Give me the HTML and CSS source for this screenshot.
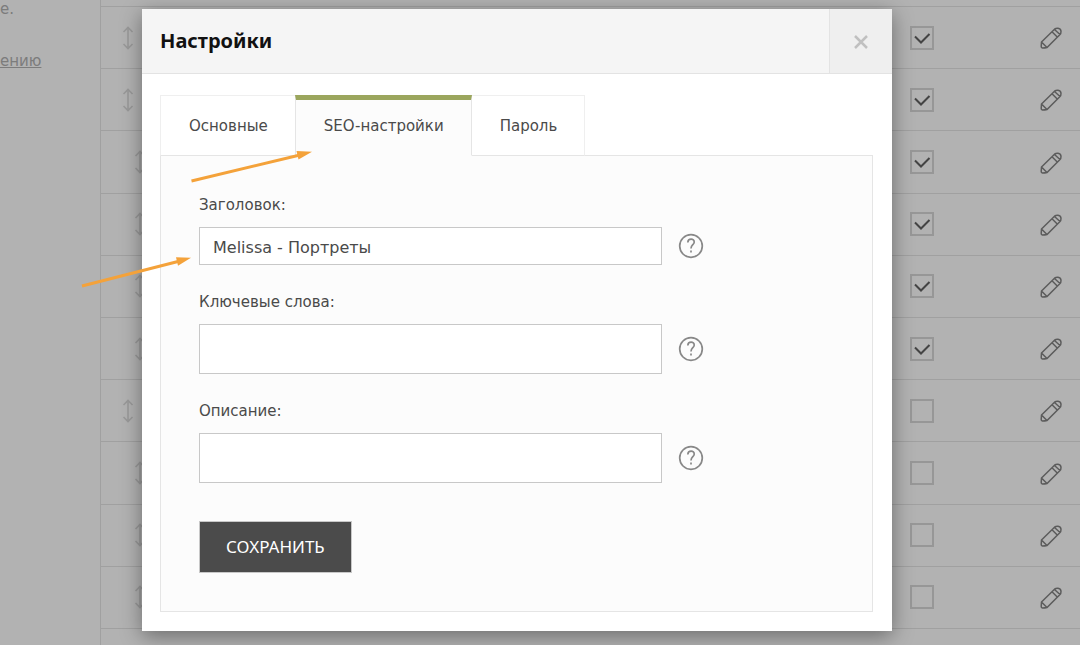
FILE: index.html
```html
<!DOCTYPE html>
<html lang="ru">
<head>
<meta charset="utf-8">
<title>Настройки</title>
<link rel="stylesheet" href="styles.css">
</head>
<body>
<svg class="sprite" aria-hidden="true">
  <symbol id="drag" viewBox="0 0 12 24"><path d="M6 1.500v21M1.500 6L6 1.500 10.500 6M1.500 18L6 22.500 10.500 18"/></symbol>
  <symbol id="check" viewBox="0 0 24 24"><path d="M5 10.500l6 6 8.500-8.500"/></symbol>
  <symbol id="pencil" viewBox="0 0 22 22"><path d="M1.500 15L14.500 2.200Q16 1 18 1.200Q21 1.600 21 4.500Q21 6.500 20 7.500L7 20.500Q5 21 2.500 21Q1.200 20.800 1.200 19.500ZM1.500 15L7 20.500M12 4.700l5.500 5.500M14.500 2.500l5.500 5"/></symbol>
  <symbol id="help" viewBox="0 0 26 26"><circle cx="13" cy="13" r="11.300"/><path d="M9.800 9.500c.2-4.500 6.700-4.200 6.400-.3-.2 2.500-3.200 2.700-3.200 6.300M13 17.500v2"/></symbol>
</svg>

<main class="page">
  <aside class="side">
    <p class="side-text">е.</p>
    <a class="side-link" href="#">ению</a>
  </aside>
  <ul class="rows">
    <li class="row"><svg class="drag"><use href="#drag"/></svg><label class="tick"><input type="checkbox" aria-label="Показывать" checked><svg><use href="#check"/></svg></label><button class="edit" aria-label="Изменить"><svg><use href="#pencil"/></svg></button></li>
    <li class="row"><svg class="drag"><use href="#drag"/></svg><label class="tick"><input type="checkbox" aria-label="Показывать" checked><svg><use href="#check"/></svg></label><button class="edit" aria-label="Изменить"><svg><use href="#pencil"/></svg></button></li>
    <li class="row nested"><svg class="drag"><use href="#drag"/></svg><label class="tick"><input type="checkbox" aria-label="Показывать" checked><svg><use href="#check"/></svg></label><button class="edit" aria-label="Изменить"><svg><use href="#pencil"/></svg></button></li>
    <li class="row nested"><svg class="drag"><use href="#drag"/></svg><label class="tick"><input type="checkbox" aria-label="Показывать" checked><svg><use href="#check"/></svg></label><button class="edit" aria-label="Изменить"><svg><use href="#pencil"/></svg></button></li>
    <li class="row nested"><svg class="drag"><use href="#drag"/></svg><label class="tick"><input type="checkbox" aria-label="Показывать" checked><svg><use href="#check"/></svg></label><button class="edit" aria-label="Изменить"><svg><use href="#pencil"/></svg></button></li>
    <li class="row nested"><svg class="drag"><use href="#drag"/></svg><label class="tick"><input type="checkbox" aria-label="Показывать" checked><svg><use href="#check"/></svg></label><button class="edit" aria-label="Изменить"><svg><use href="#pencil"/></svg></button></li>
    <li class="row"><svg class="drag"><use href="#drag"/></svg><label class="tick"><input type="checkbox" aria-label="Показывать"><svg><use href="#check"/></svg></label><button class="edit" aria-label="Изменить"><svg><use href="#pencil"/></svg></button></li>
    <li class="row nested"><svg class="drag"><use href="#drag"/></svg><label class="tick"><input type="checkbox" aria-label="Показывать"><svg><use href="#check"/></svg></label><button class="edit" aria-label="Изменить"><svg><use href="#pencil"/></svg></button></li>
    <li class="row nested"><svg class="drag"><use href="#drag"/></svg><label class="tick"><input type="checkbox" aria-label="Показывать"><svg><use href="#check"/></svg></label><button class="edit" aria-label="Изменить"><svg><use href="#pencil"/></svg></button></li>
    <li class="row nested"><svg class="drag"><use href="#drag"/></svg><label class="tick"><input type="checkbox" aria-label="Показывать"><svg><use href="#check"/></svg></label><button class="edit" aria-label="Изменить"><svg><use href="#pencil"/></svg></button></li>
  </ul>
</main>

<div class="overlay">
  <section class="modal" role="dialog" aria-labelledby="modal-title">
    <header class="modal-head">
      <h1 class="modal-title" id="modal-title">Настройки</h1>
      <button class="close" aria-label="Закрыть"><svg viewBox="0 0 14 14"><path d="M1 1l12 12M13 1L1 13"/></svg></button>
    </header>
    <div class="modal-body">
      <div class="tabs" role="tablist">
        <button class="tab" role="tab">Основные</button>
        <button class="tab active" role="tab" aria-selected="true">SEO-настройки</button>
        <button class="tab" role="tab">Пароль</button>
      </div>
      <form class="panel">
        <div class="field">
          <label for="title">Заголовок:</label>
          <div class="control"><input class="box" id="title" type="text" value="Melissa - Портреты"><svg class="help"><use href="#help"/></svg></div>
        </div>
        <div class="field">
          <label for="keys">Ключевые слова:</label>
          <div class="control"><textarea class="box" id="keys"></textarea><svg class="help"><use href="#help"/></svg></div>
        </div>
        <div class="field">
          <label for="about">Описание:</label>
          <div class="control"><textarea class="box" id="about"></textarea><svg class="help"><use href="#help"/></svg></div>
        </div>
        <button class="save" type="button">СОХРАНИТЬ</button>
      </form>
    </div>
  </section>
</div>

<svg class="pointers" viewBox="0 0 240 150" aria-hidden="true">
  <path class="shaft" d="M111.500 41L220 15M2 146l96-24.500"/>
  <path class="tip" d="M232 11.700L216.500 11l2 8.400zM111 117.700l-15-.5 2 8.500z"/>
</svg>
</body>
</html>
```

FILE: styles.css
```css
* { box-sizing: border-box; }

body {
  margin: 0;
  background: #b2b2b2;
  color: #4a4a4a;
  font: 15px/20px "DejaVu Sans", Verdana, sans-serif;
}

button { font: inherit; color: inherit; cursor: pointer; }

svg { fill: none; stroke: currentColor; }

.sprite { display: none; }

.page {
  display: flex;
  height: 100vh;
  overflow: hidden;
}

.side {
  width: 100px;
  flex: none;
  color: #7c7c7c;
}

.side-text { margin: 0 0 33px; line-height: 18px; }

.side-link { color: inherit; }

.rows {
  flex: 1;
  display: flex;
  flex-direction: column;
  margin: 0;
  padding: 6px 0 16px;
  border-left: 1px solid #a0a0a0;
  list-style: none;
}

.row {
  flex: 1;
  display: flex;
  align-items: center;
  padding: 0 18px 0 21px;
  border-top: 1px solid #a0a0a0;
}

.row:last-child { border-bottom: 1px solid #a0a0a0; }

.nested { padding-left: 33px; }

.drag {
  width: 12px;
  height: 24px;
  color: #999;
  stroke-width: 1.6;
}

.tick {
  display: grid;
  margin: 0 106px 0 auto;
}

.tick input,
.tick svg {
  grid-area: 1 / 1;
  width: 24px;
  height: 24px;
  margin: 0;
}

.tick input {
  appearance: none;
  border: 2px solid #979797;
}

.tick svg {
  visibility: hidden;
  color: #444;
  stroke-width: 2;
  pointer-events: none;
}

.tick input:checked + svg { visibility: visible; }

.edit {
  display: flex;
  padding: 1px 0 0;
  border: 0;
  background: none;
  color: #5c5c5c;
}

.edit svg { width: 22px; height: 22px; stroke-width: 1.5; }

.overlay {
  position: absolute;
  inset: 0;
  padding: 9px 188px 14px 142px;
}

.modal {
  background: #fff;
  box-shadow: 0 5px 20px rgba(0, 0, 0, 0.4);
}

.modal-head {
  display: flex;
  justify-content: space-between;
  height: 65px;
  border-bottom: 1px solid #e3e3e3;
  background: #f5f5f5;
}

.modal-title {
  margin: 0;
  padding-left: 18px;
  color: #111;
  font: bold 20px/64px "Noto Sans", Verdana, sans-serif;
}

.close {
  display: grid;
  place-items: center;
  width: 63px;
  padding: 2px 0 0;
  border: 0;
  border-left: 1px solid #e3e3e3;
  background: #efefef;
  color: #c0c0c0;
}

.close svg { width: 14px; height: 14px; stroke-width: 2.5; }

.modal-body { padding: 21px 19px 19px 18px; }

.tabs {
  position: relative;
  display: flex;
  margin-bottom: -1px;
}

.tab {
  height: 61px;
  padding: 0 27px 0 28px;
  border: 1px solid #efefef;
  border-bottom-color: #e5e5e5;
  background: #fff;
}

.tab:first-child { border-right: 0; }
.tab:last-child { border-left: 0; }

.tab.active {
  padding-bottom: 4px;
  border-color: #e5e5e5;
  border-top: 5px solid #9ba65d;
  border-bottom-color: #fcfcfc;
  background: #fcfcfc;
}

.panel {
  padding: 39px 38px 38px;
  border: 1px solid #e5e5e5;
  background: #fcfcfc;
}

.field { margin-bottom: 27px; }

.field label { display: block; margin-bottom: 12px; }

.control {
  display: flex;
  align-items: center;
  gap: 16px;
}

.box {
  flex: 0 1 463px;
  height: 38px;
  padding: 2px 13px 0;
  border: 1px solid #c8c8c8;
  background: #fff;
  color: #4a4a4a;
  font: 16px/20px "DejaVu Sans", Verdana, sans-serif;
  resize: none;
}

textarea.box { height: 50px; }

.help {
  width: 26px;
  height: 26px;
  color: #888;
  stroke-width: 1.7;
}

.save {
  display: block;
  margin-top: 38px;
  padding: 14px 26px;
  border: 1px solid #c8c8c8;
  background: #4b4b4b;
  color: #fff;
  font: 17px/22px "Noto Sans", Tahoma, sans-serif;
}

.pointers {
  position: absolute;
  top: 140px;
  left: 80px;
  width: 240px;
  height: 150px;
  pointer-events: none;
}

.shaft { stroke: #f4a23a; stroke-width: 3; }
.tip { fill: #f4a23a; stroke: none; }
```
